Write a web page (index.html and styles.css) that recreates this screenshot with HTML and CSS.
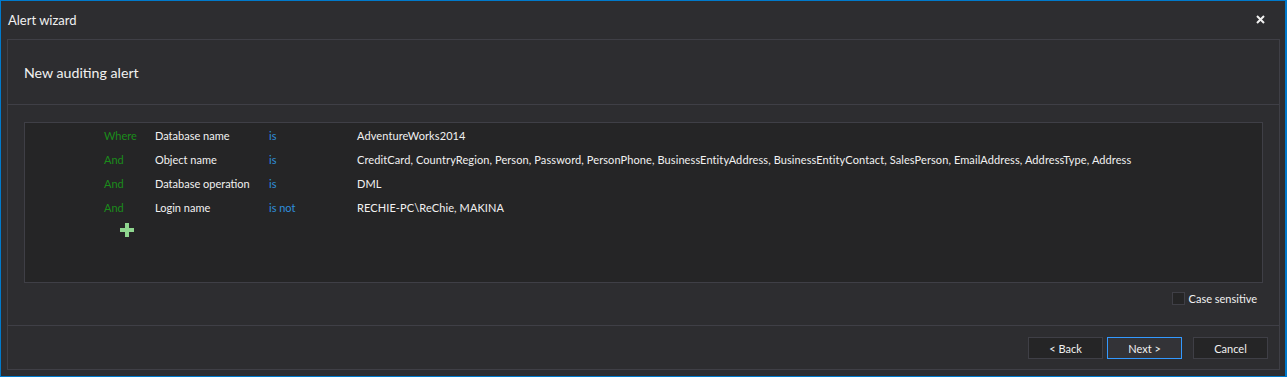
FILE: index.html
```html
<!DOCTYPE html>
<html>
<head>
<meta charset="utf-8">
<link rel="stylesheet" href="styles.css">
</head>
<body>
<div class="window">
  <div class="titlebar">
    <span class="title">Alert wizard</span>
    <span class="close"><svg width="9" height="9" viewBox="0 0 9 9"><path d="M1 1 L8 8 M8 1 L1 8" stroke="#f1f1f1" stroke-width="2"/></svg></span>
  </div>
  <div class="panel">
    <div class="header">New auditing alert</div>
    <div class="body">
      <div class="conditions">
        <div class="row"><span class="conj">Where</span><span class="field">Database name</span><span class="op">is</span><span class="val">AdventureWorks2014</span></div>
        <div class="row"><span class="conj">And</span><span class="field">Object name</span><span class="op">is</span><span class="val">CreditCard, CountryRegion, Person, Password, PersonPhone, BusinessEntityAddress, BusinessEntityContact, SalesPerson, EmailAddress, AddressType, Address</span></div>
        <div class="row"><span class="conj">And</span><span class="field">Database operation</span><span class="op">is</span><span class="val">DML</span></div>
        <div class="row"><span class="conj">And</span><span class="field">Login name</span><span class="op">is not</span><span class="val">RECHIE-PC\ReChie, MAKINA</span></div>
        <div class="add"><svg width="14" height="14" viewBox="0 0 14 14"><path d="M5 0h4v5h5v4H9v5H5V9H0V5h5z" fill="#8fd68f"/></svg></div>
      </div>
      <div class="case">
        <span class="checkbox"></span>
        <span class="case-label">Case sensitive</span>
      </div>
    </div>
    <div class="footer">
      <button class="btn">&lt; Back</button>
      <button class="btn primary">Next &gt;</button>
      <button class="btn cancel">Cancel</button>
    </div>
  </div>
</div>
</body>
</html>
```

FILE: styles.css
```css
* { box-sizing: border-box; }
html, body { margin: 0; padding: 0; background: #2d2d30; }
body { font-family: Lato, "Open Sans", sans-serif; color: #f1f1f1; }

.window {
  width: 1287px;
  height: 377px;
  border: 1px solid #007acc;
  border-right-width: 2px;
  background: #2d2d30;
  display: flex;
  flex-direction: column;
}

.titlebar {
  height: 38px;
  flex: none;
  display: flex;
  align-items: center;
  padding-left: 7px;
  padding-right: 20px;
  font-size: 13px;
}
.title { flex: 1; }
.close { display: flex; width: 9px; height: 9px; margin-top: -1px; }

.panel {
  flex: 1;
  margin: 0 5px 6px 6px;
  border: 1px solid #3f3f46;
  display: flex;
  flex-direction: column;
}

.header {
  height: 65px;
  flex: none;
  border-bottom: 1px solid #3f3f46;
  padding-left: 16px;
  display: flex;
  align-items: center;
  font-size: 14.2px;
}

.body {
  flex: 1;
  padding: 17px 16px 0 16px;
  display: flex;
  flex-direction: column;
}

.conditions {
  height: 161px;
  background: #252526;
  border: 1px solid #3f3f46;
  font-size: 11px;
}

.row {
  height: 24px;
  display: flex;
  align-items: center;
  padding-left: 79px;
  white-space: nowrap;
}
.conj { width: 51px; color: #1b8c1b; }
.field { width: 114px; }
.op { width: 88px; color: #2f8fdc; }
.val { letter-spacing: 0.1px; }

.add { padding-left: 95px; padding-top: 4px; display: flex; }

.case {
  margin-top: 9px;
  display: flex;
  justify-content: flex-end;
  align-items: center;
  padding-right: 6px;
  font-size: 11px;
}
.checkbox {
  width: 13px;
  height: 13px;
  border: 1px solid #3f3f46;
  background: #252526;
  margin-right: 4px;
}

.footer {
  height: 44px;
  flex: none;
  border-top: 1px solid #3f3f46;
  display: flex;
  justify-content: flex-end;
  align-items: flex-start;
  padding: 11px 11px 0 0;
}
.btn {
  width: 75px;
  height: 22px;
  background: #252526;
  border: 1px solid #3f3f46;
  color: #f1f1f1;
  font-family: inherit;
  font-size: 11px;
  padding: 0;
  margin-left: 4px;
}
.btn.primary { background: #333337; border-color: #3399ff; }
.btn.cancel { margin-left: 11px; }
```
